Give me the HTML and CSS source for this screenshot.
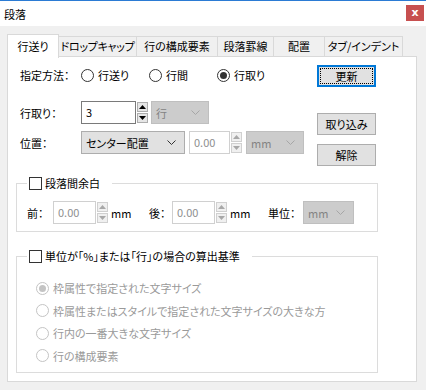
FILE: index.html
```html
<!DOCTYPE html>
<html lang="ja">
<head>
    <meta charset="UTF-8">
    <meta name="viewport" content="width=device-width, initial-scale=1.0">
    <title>段落</title>
    <link rel="stylesheet" href="styles.css">
</head>
<body>
    <div class="window">
        <div class="titlebar">
            <span class="title">段落</span>
            <span class="close">x</span>
        </div>

        <div class="client">
            <div class="tabs">
                <div class="tab active tab-spacing">行送り</div>
                <div class="tab tab-dropcap">ドロップキャップ</div>
                <div class="tab tab-parts">行の構成要素</div>
                <div class="tab tab-rule">段落罫線</div>
                <div class="tab tab-align">配置</div>
                <div class="tab tab-indent">タブ/インデント</div>
            </div>

            <div class="panel">
                <div class="top">
                    <div class="form">
                        <div class="row row-method">
                            <span class="label">指定方法：</span>
                            <span class="option"><span class="radio"></span>行送り</span>
                            <span class="option"><span class="radio"></span>行間</span>
                            <span class="option"><span class="radio checked"></span>行取り</span>
                        </div>
                        <div class="row row-lines">
                            <span class="label">行取り：</span>
                            <span class="spin">
                                <span class="field field-lines">3</span>
                                <span class="arrows">
                                    <span class="arrow up"><svg width="7" height="4" viewBox="0 0 7 4"><path d="M3.5 0L7 4H0z"/></svg></span>
                                    <span class="arrow down"><svg width="7" height="4" viewBox="0 0 7 4"><path d="M0 0H7L3.5 4z"/></svg></span>
                                </span>
                            </span>
                            <span class="select disabled select-unit">行<svg class="chev" width="9" height="5" viewBox="0 0 9 5"><path d="M0.5 0.5L4.5 4.5L8.5 0.5"/></svg></span>
                        </div>
                        <div class="row row-pos">
                            <span class="label">位置：</span>
                            <span class="select select-pos">センター配置<svg class="chev" width="9" height="5" viewBox="0 0 9 5"><path d="M0.5 0.5L4.5 4.5L8.5 0.5"/></svg></span>
                            <span class="spin spin-pos">
                                <span class="field off field-pos">0.00</span>
                                <span class="arrows off">
                                    <span class="arrow up"><svg width="7" height="4" viewBox="0 0 7 4"><path d="M3.5 0L7 4H0z"/></svg></span>
                                    <span class="arrow down"><svg width="7" height="4" viewBox="0 0 7 4"><path d="M0 0H7L3.5 4z"/></svg></span>
                                </span>
                            </span>
                            <span class="select disabled select-mm">mm<svg class="chev" width="9" height="5" viewBox="0 0 9 5"><path d="M0.5 0.5L4.5 4.5L8.5 0.5"/></svg></span>
                        </div>
                    </div>

                    <div class="buttons">
                        <button class="btn default"><span class="focus">更新</span></button>
                        <button class="btn btn-load">取り込み</button>
                        <button class="btn btn-clear">解除</button>
                    </div>
                </div>

                <fieldset class="group group-margin">
                    <legend><span class="check"></span>段落間余白</legend>
                    <div class="row row-margin">
                        <span class="label label-before">前：</span>
                        <span class="spin">
                            <span class="field off field-margin">0.00</span>
                            <span class="arrows off">
                                <span class="arrow up"><svg width="7" height="4" viewBox="0 0 7 4"><path d="M3.5 0L7 4H0z"/></svg></span>
                                <span class="arrow down"><svg width="7" height="4" viewBox="0 0 7 4"><path d="M0 0H7L3.5 4z"/></svg></span>
                            </span>
                        </span>
                        <span class="unit">mm</span>
                        <span class="label label-after">後：</span>
                        <span class="spin">
                            <span class="field off field-margin">0.00</span>
                            <span class="arrows off">
                                <span class="arrow up"><svg width="7" height="4" viewBox="0 0 7 4"><path d="M3.5 0L7 4H0z"/></svg></span>
                                <span class="arrow down"><svg width="7" height="4" viewBox="0 0 7 4"><path d="M0 0H7L3.5 4z"/></svg></span>
                            </span>
                        </span>
                        <span class="unit">mm</span>
                        <span class="label label-unit">単位：</span>
                        <span class="select disabled select-gunit">mm<svg class="chev" width="9" height="5" viewBox="0 0 9 5"><path d="M0.5 0.5L4.5 4.5L8.5 0.5"/></svg></span>
                    </div>
                </fieldset>

                <fieldset class="group group-basis">
                    <legend><span class="check"></span>単位が「%」または「行」の場合の算出基準</legend>
                    <div class="choices">
                        <div class="choice"><span class="radio checked off"></span>枠属性で指定された文字サイズ</div>
                        <div class="choice"><span class="radio off"></span>枠属性またはスタイルで指定された文字サイズの大きな方</div>
                        <div class="choice"><span class="radio off"></span>行内の一番大きな文字サイズ</div>
                        <div class="choice"><span class="radio off"></span>行の構成要素</div>
                    </div>
                </fieldset>
            </div>
        </div>
    </div>
</body>
</html>
```

FILE: styles.css
```css
* {
    box-sizing: border-box;
}
body {
    margin: 0;
    font-family: "Noto Sans CJK JP", "Noto Sans", sans-serif;
    font-size: 11px;
    font-feature-settings: "palt";
    color: #000;
    background-color: #f0f0f0;
}
.window {
    width: 426px;
    height: 390px;
    border-top: 1px solid #2b7bd4;
    background-color: #f0f0f0;
}
.titlebar {
    height: 25px;
    background-color: #fff;
    display: flex;
    align-items: center;
    justify-content: space-between;
    padding: 0 2px 0 4px;
}
.title {
    font-size: 11px;
    line-height: 14px;
}
.close {
    width: 18px;
    height: 16px;
    margin-top: -1px;
    background-color: #c75050;
    color: #fff;
    font-family: "DejaVu Sans", sans-serif;
    font-weight: bold;
    font-size: 11px;
    line-height: 15px;
    text-align: center;
}

/* tabs */
.client {
    padding: 8px 9px 0 7px;
}
.tabs {
    display: flex;
    align-items: flex-end;
    height: 23px;
    margin-bottom: -1px;
}
.tab {
    height: 21px;
    border: 1px solid #d9d9d9;
    border-left: none;
    background-color: #f0f0f0;
    text-align: center;
    line-height: 19px;
    white-space: nowrap;
}
.tab.active {
    position: relative;
    z-index: 1;
    height: 24px;
    margin-bottom: -1px;
    border-left: 1px solid #d9d9d9;
    border-bottom: none;
    background-color: #fff;
    line-height: 22px;
}
.tab-spacing { width: 52px; }
.tab-dropcap { width: 78px; letter-spacing: -0.3px; }
.tab-parts { width: 81px; }
.tab-rule { width: 56px; }
.tab-align { width: 51px; }
.tab-indent { width: 78px; }

.panel {
    height: 326px;
    border: 1px solid #d9d9d9;
    background-color: #fff;
}

/* top area */
.top {
    display: flex;
    justify-content: space-between;
    padding-top: 7px;
}
.form {
    padding-left: 12px;
}
.row {
    display: flex;
    align-items: center;
    height: 23px;
    white-space: nowrap;
}
.row-method {
    height: 22px;
}
.row-lines {
    margin-top: 15px;
}
.row-pos {
    margin-top: 7px;
}
.label {
    width: 61px;
}
.option {
    display: flex;
    align-items: center;
    width: 68px;
}
.radio {
    width: 13px;
    height: 13px;
    border: 1px solid #333;
    border-radius: 50%;
    margin-right: 4px;
    display: flex;
    align-items: center;
    justify-content: center;
    background-color: #fff;
}
.radio.checked::after {
    content: "";
    width: 7px;
    height: 7px;
    border-radius: 50%;
    background-color: #333;
}
.radio.off {
    border-color: #c4c4c4;
}
.radio.off.checked::after {
    background-color: #c4c4c4;
}

/* spin boxes */
.spin {
    display: flex;
    height: 23px;
}
.field {
    height: 23px;
    border: 1px solid #7a7a7a;
    padding-left: 4px;
    line-height: 21px;
    background-color: #fff;
}
.field.off {
    border-color: #d0d0d0;
    color: #8e8e8e;
}
.field-lines { width: 55px; }
.field-pos { width: 41px; }
.field-margin { width: 43px; }
.arrows {
    display: flex;
    flex-direction: column;
    justify-content: space-between;
    width: 12px;
    padding: 1px 0 1px 1px;
}
.arrow {
    height: 10px;
    border: 1px solid #adadad;
    background-color: #e6e6e6;
    display: flex;
    align-items: center;
    justify-content: center;
}
.arrow svg {
    fill: #000;
}
.arrows.off .arrow {
    border-color: #d0d0d0;
    background-color: #f0f0f0;
}
.arrows.off .arrow svg {
    fill: #a8a8a8;
}
.spin-pos {
    margin-left: 4px;
}

/* combo boxes */
.select {
    display: flex;
    align-items: center;
    justify-content: space-between;
    height: 23px;
    padding: 0 8px 0 4px;
    border: 1px solid #adadad;
    background-color: #e1e1e1;
}
.select .chev {
    fill: none;
    stroke: #333;
    stroke-width: 1;
}
.select.disabled {
    border-color: #bfbfbf;
    background-color: #cccccc;
    color: #838383;
}
.select.disabled .chev {
    stroke: #a6a6a6;
}
.select-unit {
    width: 58px;
    margin-left: 3px;
}
.select-pos {
    width: 104px;
}
.select-mm {
    width: 58px;
    margin-left: 4px;
}

/* buttons */
.buttons {
    display: flex;
    flex-direction: column;
    margin-right: 40px;
    padding-top: 1px;
}
.btn {
    width: 59px;
    height: 22px;
    padding: 0;
    border: 1px solid #adadad;
    background-color: #e1e1e1;
    font-family: inherit;
    font-size: 11px;
    font-feature-settings: "palt";
    color: #000;
}
.btn.default {
    border: 2px solid #0078d7;
    padding: 1px;
}
.btn .focus {
    display: block;
    height: 100%;
    border: 1px dotted #000;
    line-height: 14px;
}
.btn-load {
    margin-top: 26px;
}
.btn-clear {
    margin-top: 9px;
}

/* group boxes */
.group {
    width: 362px;
    margin: 0 0 0 8px;
    padding: 0;
    border: 1px solid #dcdcdc;
}
.group legend {
    display: flex;
    align-items: center;
    margin-left: 10px;
    padding: 0 12px 0 2px;
    line-height: 14px;
    color: #000;
}
.check {
    width: 13px;
    height: 13px;
    border: 1px solid #333;
    margin-right: 3px;
    background-color: #fff;
}
.group-margin {
    margin-top: 10px;
    padding-bottom: 7px;
}
.row-margin {
    margin-top: 11px;
    padding-left: 10px;
}
.row-margin .label-before {
    width: 26px;
}
.row-margin .label-after {
    width: 23px;
}
.row-margin .label-unit {
    width: 35px;
}
.unit {
    width: 41px;
    padding-left: 3px;
}
.select-gunit {
    width: 51px;
}
.group-basis {
    margin-top: 17px;
    padding-bottom: 5px;
}
.choices {
    padding: 14px 0 0 19px;
    color: #9a9a9a;
}
.choice {
    display: flex;
    align-items: center;
    height: 22.5px;
    white-space: nowrap;
}
```
